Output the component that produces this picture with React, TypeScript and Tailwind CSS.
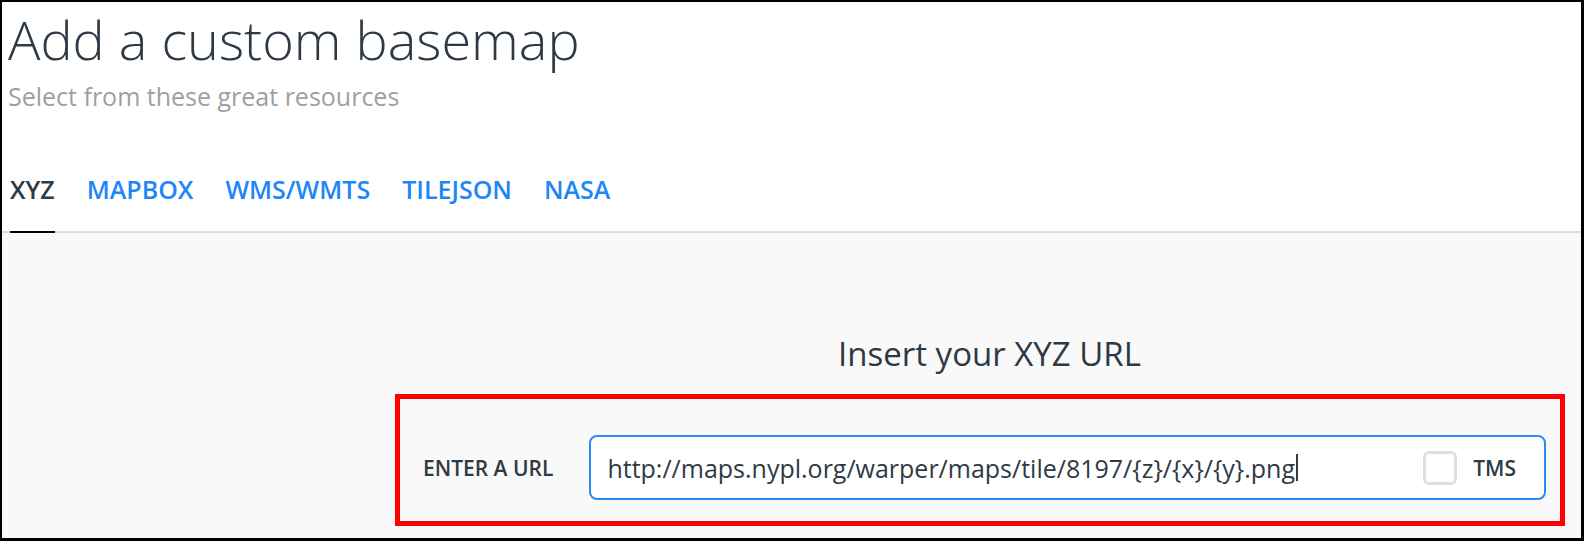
const tabs = [
  { label: 'XYZ', active: true },
  { label: 'MAPBOX' },
  { label: 'WMS/WMTS' },
  { label: 'TILEJSON' },
  { label: 'NASA' },
]

export default function App() {
  return (
    <div className="w-[1584px] h-[541px] flex flex-col overflow-hidden bg-white border-black border-l-2 border-t-2 border-r-[3px] border-b-[3px] font-['Open_Sans',sans-serif]">
      {/* HEADER */}
      <header className="pl-[6px] pt-[10px]">
        <h1 className="text-[54px] leading-[54px] font-light text-[#2d3a45]">Add a custom basemap</h1>
        <p className="mt-[18px] text-[25px] leading-[25px] text-[#9aa1a6]">Select from these great resources</p>
      </header>

      {/* TABS */}
      <nav className="mt-[68px] flex gap-[32px] pl-[8px] border-b-2 border-[#dddddd]">
        {tabs.map((tab) => (
          <div
            key={tab.label}
            className={`pb-[29px] -mb-[2px] text-[25px] leading-[25px] font-semibold border-b-2 ${
              tab.active ? 'text-[#2f3a42] border-black' : 'text-[#1e86f7] border-transparent'
            }`}
          >
            {tab.label}
          </div>
        ))}
      </nav>

      {/* CONTENT */}
      <section className="flex-1 bg-[#f9f9f9] pl-[393px] pr-[16px] pt-[104px]">
        <h2 className="pl-[19px] text-center text-[33px] leading-[33px] text-[#2d3a45]">Insert your XYZ URL</h2>

        <div className="mt-[24px] flex items-center gap-[36px] border-[5px] border-[#ff0000] pt-[36px] pb-[21px] pl-[23px] pr-[14px]">
          <label className="text-[21px] leading-[24px] font-semibold text-[#2f3a42]">ENTER A URL</label>
          <div className="flex-1 h-[65px] flex items-center bg-white border-2 border-[#2a8bf6] rounded-[8px] pl-[16px] pr-[28px]">
            <span className="text-[25px] leading-[30px] text-[#2f3a45]">
              http://maps.nypl.org/warper/maps/tile/8197/{'{z}'}/{'{x}'}/{'{y}'}.png
            </span>
            <span className="ml-[1px] w-[2px] h-[27px] bg-[#2f3a45]" />
            <div className="ml-auto w-[34px] h-[34px] rounded-[6px] border-[3px] border-[#dedede] bg-white" />
            <span className="ml-[16px] text-[21px] leading-[24px] font-semibold text-[#2f3a42]">TMS</span>
          </div>
        </div>
      </section>
    </div>
  )
}
